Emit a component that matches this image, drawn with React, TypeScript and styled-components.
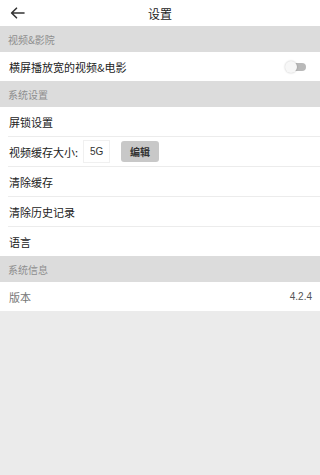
import styled, { createGlobalStyle } from "styled-components";

const GlobalStyle = createGlobalStyle`
  html, body {
    margin: 0;
    padding: 0;
    background: #ebebeb;
  }
  body {
    font-family: "Noto Sans CJK SC", "Liberation Sans", sans-serif;
  }
`;

const Page = styled.div`
  width: 100%;
  min-height: 475px;
  background: #ebebeb;
`;

const Header = styled.div`
  height: 26px;
  background: #ffffff;
  display: flex;
  align-items: center;
  justify-content: center;
  position: relative;
`;

const BackButton = styled.div`
  position: absolute;
  left: 9px;
  top: 6px;
  width: 16px;
  height: 14px;
  display: flex;
  align-items: center;
  justify-content: center;
`;

const Title = styled.div`
  font-size: 12px;
  color: #222;
`;

const SectionTitle = styled.div`
  height: 26px;
  background: #dcdcdc;
  display: flex;
  align-items: center;
  padding-left: 8px;
  font-size: 10px;
  color: #8e8e8e;
`;

const Group = styled.div`
  background: #ffffff;
`;

const Row = styled.div`
  height: 29px;
  display: flex;
  align-items: center;
  padding: 0 8px 0 9px;
  font-size: 11px;
  color: #222;
  position: relative;
  & + & {
    margin-top: 1px;
  }
  & + &::before {
    content: "";
    position: absolute;
    left: 8px;
    right: 0;
    top: -1px;
    height: 1px;
    background: #ececec;
  }
`;

const Label = styled.span<{ muted?: boolean }>`
  color: ${(p) => (p.muted ? "#777" : "#222")};
  flex: 1;
`;

const InlineLabel = styled.span`
  color: #222;
`;

const Value = styled.span`
  font-family: "Liberation Sans", sans-serif;
  font-size: 10px;
  color: #555;
`;

const SizeBox = styled.div`
  margin-left: 5px;
  width: 25px;
  height: 21px;
  border: 1px solid #f0f0f0;
  display: flex;
  align-items: center;
  justify-content: center;
  font-family: "Liberation Sans", sans-serif;
  font-size: 10px;
  color: #333;
`;

const EditButton = styled.div`
  margin-left: 11px;
  width: 38px;
  height: 21px;
  border-radius: 3px;
  background: #c8c8c8;
  display: flex;
  align-items: center;
  justify-content: center;
  font-size: 10px;
  font-weight: bold;
  color: #333;
`;

const Toggle = styled.div`
  position: relative;
  width: 21px;
  height: 12px;
  margin-right: 6px;
`;

const Track = styled.div`
  position: absolute;
  left: 4px;
  top: 2px;
  width: 17px;
  height: 8px;
  border-radius: 4px;
  background: #b9b9b9;
`;

const Thumb = styled.div`
  position: absolute;
  left: 0;
  top: 0;
  width: 12px;
  height: 12px;
  border-radius: 50%;
  background: #f7f7f7;
  box-shadow: 0 0 2px rgba(0, 0, 0, 0.25);
`;

export default function App() {
  return (
    <Page>
      <GlobalStyle />
      <Header>
        <BackButton>
          <svg width="15" height="12" viewBox="0 0 15 12">
            <path
              d="M14 6H2M6.5 1.2L1.6 6l4.9 4.8"
              fill="none"
              stroke="#333"
              strokeWidth="1.6"
              strokeLinecap="round"
              strokeLinejoin="round"
            />
          </svg>
        </BackButton>
        <Title>设置</Title>
      </Header>

      <SectionTitle>视频&amp;影院</SectionTitle>
      <Group>
        <Row>
          <Label>横屏播放宽的视频&amp;电影</Label>
          <Toggle>
            <Track />
            <Thumb />
          </Toggle>
        </Row>
      </Group>

      <SectionTitle>系统设置</SectionTitle>
      <Group>
        <Row>
          <Label>屏锁设置</Label>
        </Row>
        <Row>
          <InlineLabel>视频缓存大小:</InlineLabel>
          <SizeBox>5G</SizeBox>
          <EditButton>编辑</EditButton>
        </Row>
        <Row>
          <Label>清除缓存</Label>
        </Row>
        <Row>
          <Label>清除历史记录</Label>
        </Row>
        <Row>
          <Label>语言</Label>
        </Row>
      </Group>

      <SectionTitle>系统信息</SectionTitle>
      <Group>
        <Row>
          <Label muted>版本</Label>
          <Value>4.2.4</Value>
        </Row>
      </Group>
    </Page>
  );
}
